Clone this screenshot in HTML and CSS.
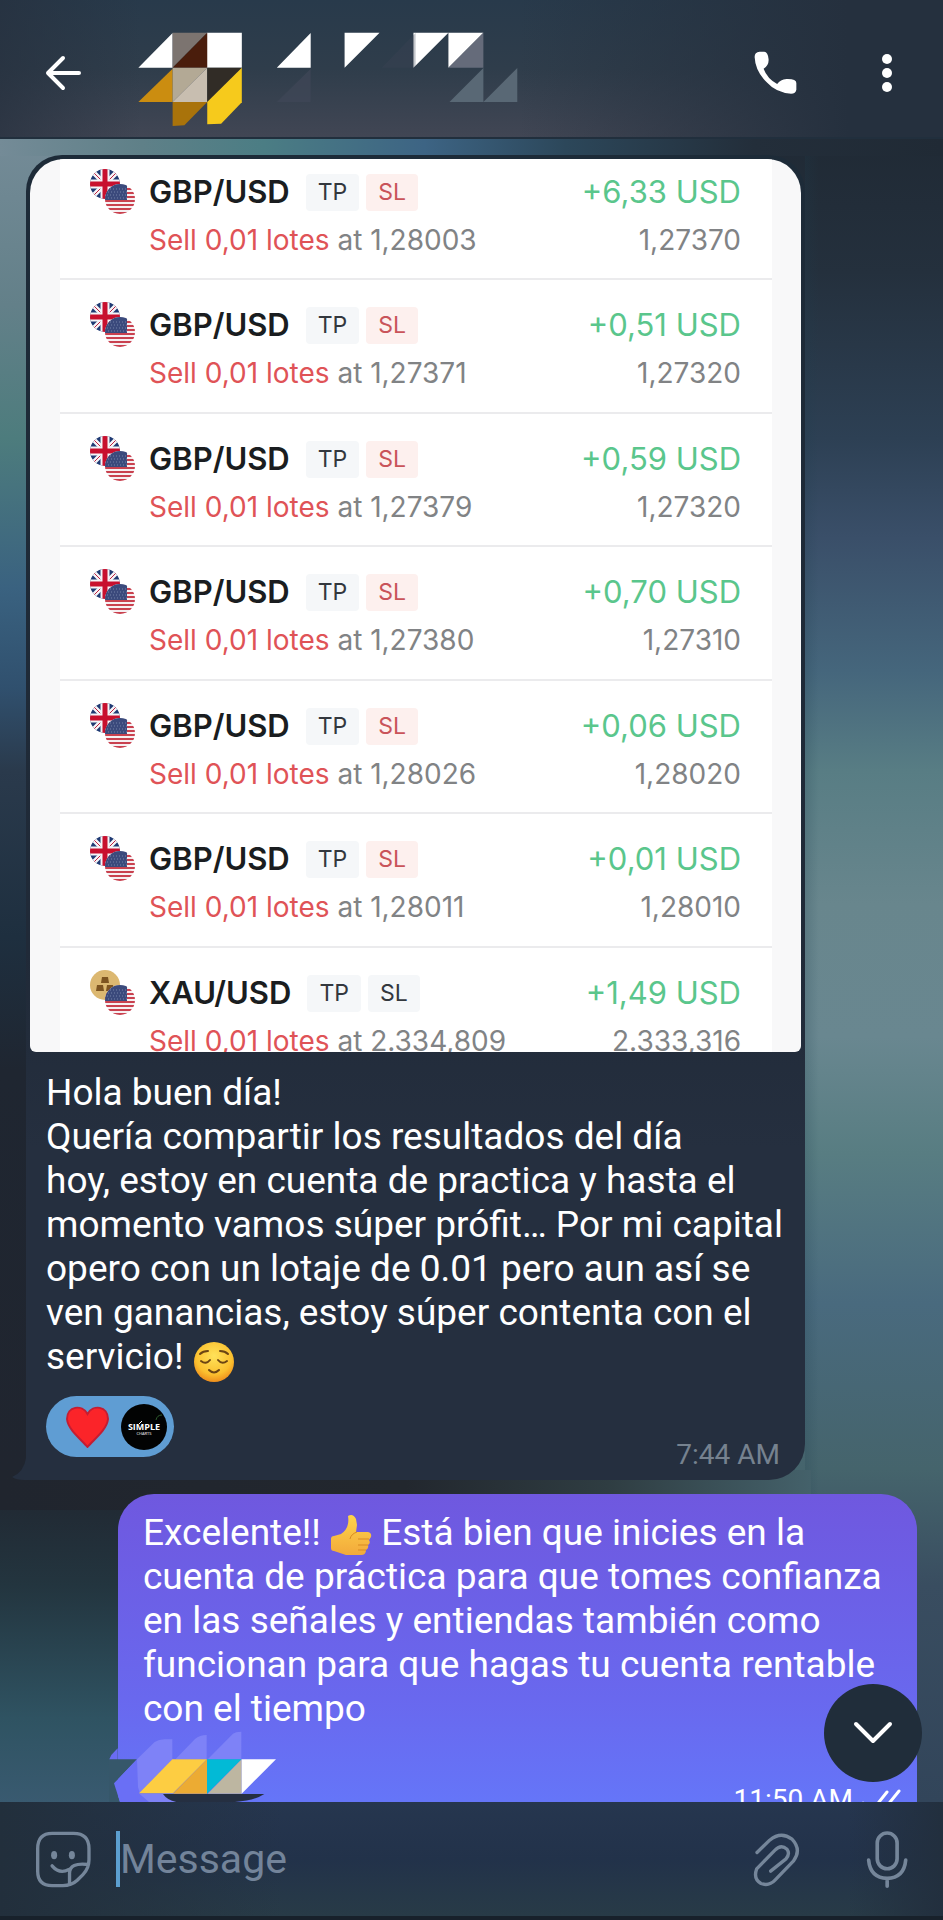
FILE: index.html
```
<!DOCTYPE html>
<html lang="es">
<head>
<meta charset="utf-8">
<meta name="viewport" content="width=device-width, initial-scale=1">
<title>Chat</title>
<link rel="stylesheet" href="styles.css">
</head>
<body>
<svg class="defs" width="0" height="0" aria-hidden="true">
  <defs>
    <clipPath id="disc-back"><circle cx="15" cy="15" r="15"/></clipPath>
    <clipPath id="disc-front"><circle cx="30" cy="30" r="15"/></clipPath>
    <radialGradient id="face" cx=".5" cy=".35" r=".65">
      <stop offset="0" stop-color="#ffe25a"/><stop offset=".7" stop-color="#fbc02f"/><stop offset="1" stop-color="#ee8e1c"/>
    </radialGradient>
    <linearGradient id="thumb" x1="0" y1="0" x2="0" y2="1">
      <stop offset="0" stop-color="#ffd54a"/><stop offset="1" stop-color="#f2a93b"/>
    </linearGradient>
  </defs>
  <symbol id="flag-us" viewBox="0 0 45 45">
    <g clip-path="url(#disc-front)">
      <path fill="#f6f0f2" d="M15 15h30v30H15z"/>
      <path stroke="#c9414f" stroke-width="2" d="M15 20h30M15 24h30M15 28h30M15 32h30M15 36h30M15 40h30M15 44h30"/>
      <path fill="#3b4a7c" d="M15 15h22v16H15z"/>
      <path stroke="#7482a8" stroke-width="1" stroke-dasharray="1 2" d="M17 20h20M18 23h19M17 26h20M18 29h19"/>
    </g>
  </symbol>
  <symbol id="pair-gbp" viewBox="0 0 45 45">
    <g clip-path="url(#disc-back)">
      <path fill="#1f3a73" d="M0 0h30v30H0z"/>
      <path stroke="#f4f4f8" stroke-width="5" d="M0 0l30 30M30 0L0 30"/>
      <path stroke="#c41f3b" stroke-width="1" d="M0 0l30 30M30 0L0 30"/>
      <path stroke="#f4f4f8" stroke-width="9" d="M15 0v30M0 15h30"/>
      <path stroke="#c8102e" stroke-width="5" d="M15 0v30M0 15h30"/>
    </g>
    <use href="#flag-us" width="45" height="45"/>
  </symbol>
  <symbol id="pair-xau" viewBox="0 0 45 45">
    <circle cx="15" cy="15" r="15" fill="#dcb871"/>
    <path fill="#7d5420" d="M12 7h6l1 6h-8zM7 15h6l1 6H6zM17 15h6l1 6h-8z"/>
    <use href="#flag-us" width="45" height="45"/>
  </symbol>
</svg>

<div class="app">
  <header class="topbar">
    <button class="icon-btn" type="button" aria-label="Back">
      <svg width="36" height="36" viewBox="0 0 36 36" fill="none" stroke="#fff" stroke-width="4" stroke-linecap="round" stroke-linejoin="round"><path d="M34 18H3M18 3L3 18l15 15"/></svg>
    </button>
    <svg class="contact" width="380" height="108" viewBox="387 56 1065 324" preserveAspectRatio="none" role="img" aria-label="Contact">
      <path fill="#fff" d="M388 202L484 98v104zM580 97h98v105h-98zM776 202l95-104v104zM966 97h98l-98 105zM1159 97h98l-98 105zM1257 97h98l-98 105z"/>
      <path fill="#7c7470" d="M484 97h97l-97 105z"/>
      <path fill="#4a1d0c" d="M581 97v105h-97z"/>
      <path fill="#cb8d10" d="M388 305l96-100v100z"/>
      <path fill="#b3a995" d="M484 202h97l-97 103z"/>
      <path fill="#c8beb0" d="M581 202v103h-97z"/>
      <path fill="#312c26" d="M581 202h97l-97 103z"/>
      <path fill="#a9730b" d="M484 305h97l-64 70-33 2z"/>
      <path fill="#f6ca1c" d="M678 202v104l-58 64-39 2v-67z"/>
      <path fill="#3e4656" d="M776 305l95-100v100z" opacity=".8"/>
      <path fill="#3e4656" d="M1070 202l95-104v104z" opacity=".3"/>
      <path fill="#656b7a" d="M1355 97v105h-98z"/>
      <path fill="#596875" d="M1260 305l95-102v102zM1355 305l95-102v102z"/>
    </svg>
    <div class="top-actions">
      <button class="icon-btn" type="button" aria-label="Call">
        <svg width="45" height="45" viewBox="580 150 136 136" fill="#fff"><path d="M585 172Q584 156 600 155h14q11 1 13 22 2 18-15 30 11 30 41 46 10-14 28-15 30-1 30 12v20q-2 12-16 12-45-3-72-33-36-34-38-77z"/></svg>
      </button>
      <button class="icon-btn" type="button" aria-label="More options">
        <svg width="12" height="40" viewBox="0 0 12 40" fill="#fff"><circle cx="6" cy="6" r="5"/><circle cx="6" cy="20" r="5"/><circle cx="6" cy="34" r="5"/></svg>
      </button>
    </div>
  </header>

  <main class="chat">
    <article class="bubble bubble-in">
      <svg class="tail" width="24" height="28" viewBox="0 0 24 28"><path fill="#252f3f" d="M14 0v6Q12 20 0 25q4 3 12 3h12V0z"/></svg>
      <div class="photo">
        <ul class="trades">
          <li class="trade">
            <svg class="pair-icon" width="45" height="45"><use href="#pair-gbp"/></svg>
            <div class="info"><p class="head"><strong>GBP/USD</strong><span class="chip">TP</span><span class="chip chip-red">SL</span></p><p class="sub"><span class="sell">Sell 0,01 lotes</span> at 1,28003</p></div>
            <div class="result"><p class="gain">+6,33 USD</p><p class="sub">1,27370</p></div>
          </li>
          <li class="trade">
            <svg class="pair-icon" width="45" height="45"><use href="#pair-gbp"/></svg>
            <div class="info"><p class="head"><strong>GBP/USD</strong><span class="chip">TP</span><span class="chip chip-red">SL</span></p><p class="sub"><span class="sell">Sell 0,01 lotes</span> at 1,27371</p></div>
            <div class="result"><p class="gain">+0,51 USD</p><p class="sub">1,27320</p></div>
          </li>
          <li class="trade">
            <svg class="pair-icon" width="45" height="45"><use href="#pair-gbp"/></svg>
            <div class="info"><p class="head"><strong>GBP/USD</strong><span class="chip">TP</span><span class="chip chip-red">SL</span></p><p class="sub"><span class="sell">Sell 0,01 lotes</span> at 1,27379</p></div>
            <div class="result"><p class="gain">+0,59 USD</p><p class="sub">1,27320</p></div>
          </li>
          <li class="trade">
            <svg class="pair-icon" width="45" height="45"><use href="#pair-gbp"/></svg>
            <div class="info"><p class="head"><strong>GBP/USD</strong><span class="chip">TP</span><span class="chip chip-red">SL</span></p><p class="sub"><span class="sell">Sell 0,01 lotes</span> at 1,27380</p></div>
            <div class="result"><p class="gain">+0,70 USD</p><p class="sub">1,27310</p></div>
          </li>
          <li class="trade">
            <svg class="pair-icon" width="45" height="45"><use href="#pair-gbp"/></svg>
            <div class="info"><p class="head"><strong>GBP/USD</strong><span class="chip">TP</span><span class="chip chip-red">SL</span></p><p class="sub"><span class="sell">Sell 0,01 lotes</span> at 1,28026</p></div>
            <div class="result"><p class="gain">+0,06 USD</p><p class="sub">1,28020</p></div>
          </li>
          <li class="trade">
            <svg class="pair-icon" width="45" height="45"><use href="#pair-gbp"/></svg>
            <div class="info"><p class="head"><strong>GBP/USD</strong><span class="chip">TP</span><span class="chip chip-red">SL</span></p><p class="sub"><span class="sell">Sell 0,01 lotes</span> at 1,28011</p></div>
            <div class="result"><p class="gain">+0,01 USD</p><p class="sub">1,28010</p></div>
          </li>
          <li class="trade">
            <svg class="pair-icon" width="45" height="45"><use href="#pair-xau"/></svg>
            <div class="info"><p class="head"><strong>XAU/USD</strong><span class="chip">TP</span><span class="chip">SL</span></p><p class="sub"><span class="sell">Sell 0,01 lotes</span> at 2.334,809</p></div>
            <div class="result"><p class="gain">+1,49 USD</p><p class="sub">2.333,316</p></div>
          </li>
        </ul>
      </div>
      <p class="text">Hola buen día!<br>Quería compartir los resultados del día<br>hoy, estoy en cuenta de practica y hasta el momento vamos súper prófit… Por mi capital opero con un lotaje de 0.01 pero aun así se ven ganancias, estoy súper contenta con el servicio! <svg class="emoji" width="42" height="42" viewBox="0 0 42 42" role="img" aria-label="😌"><circle cx="21" cy="21" r="20" fill="url(#face)"/><g fill="none" stroke="#6b4413" stroke-width="2" stroke-linecap="round"><path d="M8 20q5 4 9-1M25 19q4 5 9 1M7 13q3-3 8-3M27 10q5 0 8 3M16 29q5 5 10 0"/></g></svg></p>
      <footer class="meta">
        <button class="reaction" type="button" aria-label="Heart reaction">
          <svg width="43" height="42" viewBox="0 0 43 42"><path fill="#fb2429" stroke="#c41d32" stroke-width="2" d="M21.500 41C16 34 2 24 1 13 1 0 16-2 21.500 8 27-2 42 0 42 13c-1 11-15 21-20.500 28z"/></svg>
          <svg width="46" height="46" viewBox="0 0 46 46"><circle cx="23" cy="23" r="23" fill="#020303"/><text class="logo-a" x="23" y="26" text-anchor="middle">SIMPLE</text><text class="logo-b" x="23" y="31" text-anchor="middle">CHARTS</text><path fill="none" stroke="#fff" stroke-width="1" d="M18 20l3-3"/><path fill="none" stroke="#2d5a2c" stroke-width="1" d="M35 16q1-5 6-5"/></svg>
        </button>
        <time class="time">7:44 AM</time>
      </footer>
    </article>

    <article class="bubble bubble-out">
      <p class="text">Excelente!! <svg class="emoji emoji-thumb" width="42" height="42" viewBox="0 0 42 42" role="img" aria-label="👍"><path fill="url(#thumb)" d="M18 2q5-3 8 3l1 6-1 7h12q4 1 3 5l-2 3q2 3-1 5 1 3-2 5 0 5-5 5H16L4 37q-3 0-3-3V25q0-3 3-3l7-2Q20 14 18 2z"/><path fill="none" stroke="#d98a22" stroke-width="1" d="M28 25h11M28 31h10M28 36h8M27 18q-6 2-7 7"/></svg> Está bien que inicies en la cuenta de práctica para que tomes confianza en las señales y entiendas también como funcionan para que hagas tu cuenta rentable con el tiempo</p>
      <footer class="meta">
        <time class="time">11:50 AM</time>
        <svg width="41" height="26" viewBox="0 0 41 26" fill="none" stroke="#fff" stroke-width="3" stroke-linecap="round"><path d="M2 15l8 9L26 4M19 22l2 2L38 3"/></svg>
      </footer>
    </article>

    <svg class="mosaic" width="168" height="72" viewBox="28 90 504 216" aria-hidden="true">
      <path fill="#36576a" d="M28 178h84l-69 72 18 56H28z"/>
      <path fill="#6a6cf3" d="M54 145v33H29l6-13z"/>
      <path fill="#6a6ff5" d="M112 178l-69 72 18 56h90V178z"/>
      <path fill="#7e82f7" d="M112 178l53-52q12-8 30-8h23v60L120 278l-5-17zM228 177l58-60q14-12 35-12v72zM325 177l75-76q8-6 25-6v82zM120 282h72l36 24h-80z"/>
      <path fill="#fdcd42" d="M218 178h104L220 280H118z"/>
      <path fill="#ecab33" d="M322 178v103H220z"/>
      <path fill="#02bad6" d="M322 178h104L322 281z"/>
      <path fill="#bdb6a1" d="M426 178v103H324z"/>
      <path fill="#fff" d="M426 178h103L426 281z"/>
      <path fill="#252f41" d="M190 282h304q-30 20-88 24H230q-28-6-40-24z"/>
    </svg>

    <button class="scroll-down" type="button" aria-label="Scroll to bottom">
      <svg width="40" height="24" viewBox="0 0 40 24" fill="none" stroke="#fff" stroke-width="4" stroke-linecap="round" stroke-linejoin="round"><path d="M3 3l17 17L37 3"/></svg>
    </button>
  </main>

  <form class="composer">
    <button class="icon-btn" type="button" aria-label="Stickers">
      <svg width="57" height="57" viewBox="104 156 170 170" fill="none" stroke="#75869a" stroke-width="10" stroke-linecap="round" stroke-linejoin="round"><path d="M155 163h64q46 0 46 46v33q0 26-18 44l-17 17q-17 16-43 16h-32q-43 0-43-43v-67q0-46 43-46zM263 256q-56-7-56 26v34M155 260q22 26 50 11"/><g fill="#75869a" stroke="none"><ellipse cx="161" cy="228" rx="9" ry="12"/><ellipse cx="214" cy="228" rx="9" ry="12"/></g></svg>
    </button>
    <input class="field" type="text" placeholder="Message" aria-label="Message">
    <button class="icon-btn" type="button" aria-label="Attach file">
      <svg width="50" height="57" viewBox="335 515 150 170" fill="none" stroke="#75869a" stroke-width="10" stroke-linecap="round" stroke-linejoin="round"><path d="M350 579l38-37q34-28 67-3 30 32 4 66l-55 57q-18 19-42 10-24-14-13-44l55-56q18-19 36-3 10 14-3 29l-46 37"/></svg>
    </button>
    <button class="icon-btn" type="button" aria-label="Record voice message">
      <svg width="45" height="61" viewBox="675 510 136 182" fill="none" stroke="#75869a" stroke-width="11" stroke-linecap="round"><rect x="712" y="521" width="60" height="108" rx="30"/><path d="M686 603q5 54 56 55 51-1 56-55M742 658v24"/></svg>
    </button>
  </form>
</div>
</body>
</html>
```
FILE: styles.css
```
* {
  box-sizing: border-box;
}

body {
  margin: 0;
  font-family: Roboto, "Liberation Sans", sans-serif;
  background: #1d2732;
  color: #fff;
}

p,
ul {
  margin: 0;
  padding: 0;
}

button {
  border: 0;
  padding: 0;
  background: none;
  font: inherit;
  color: inherit;
}

svg {
  flex: none;
}

.defs {
  position: absolute;
}

.app {
  display: flex;
  flex-direction: column;
  height: 100vh;
  overflow: hidden;
}

/* Top bar */
.topbar {
  flex: none;
  display: flex;
  align-items: center;
  gap: 57px;
  height: 139px;
  padding: 8px 50px 0 45px;
  border-bottom: 2px solid #212f3d;
  background:
    linear-gradient(90deg, rgba(38, 48, 62, .7), transparent 15%, transparent 55%, #25303e 90%),
    linear-gradient(180deg, #283a4b, #2f3d4b 50%, #414654);
}

.icon-btn {
  display: flex;
  flex: none;
}

.top-actions {
  display: flex;
  align-items: center;
  gap: 83px;
  margin-left: auto;
}

/* Conversation */
.chat {
  position: relative;
  flex: 1;
  min-height: 0;
  display: flex;
  flex-direction: column;
  gap: 14px;
  padding: 16px 26px 0;
  overflow: hidden;
  background:
    linear-gradient(90deg, #748b97, #5f8088 15%, #4b7d84 28%, #3d6484 45%, #2c475a 60%, #232e3a 80%, #202a35) top / 100% 17px no-repeat,
    linear-gradient(90deg, #20252e, #22272e 50%, #2f3d42 75%, #44616a) 0 82% / 86% 40px no-repeat,
    linear-gradient(90deg, rgba(30, 62, 78, .2), transparent 10%) right / 138px 100% no-repeat,
    linear-gradient(180deg, #202a35, #24303d 8%, #2d4054 18%, #3a4f69 24%, #45667c 32%, #587d84 38%, #68868d 46%, #698790 54%, #587d82 61%, #496a7e 70%, #45646c 80%, #394d60 87%, #32455a) right / 50% 100% no-repeat,
    linear-gradient(180deg, #748b97, #638089 10%, #4d7c7d 18%, #3a6280 27%, #30506e 33%, #2a3a4c 38%, #1e2f3f 48%, #1f2631 56%, #20252f 80%, #23353f 87%, #2f5362 95%, #395a70) left / 50% 100% no-repeat;
}

.bubble {
  position: relative;
  flex: none;
}

.text {
  font-size: 37px;
  line-height: 44px;
}

.emoji {
  vertical-align: -10px;
  margin: -4px 0;
}

.emoji-thumb {
  vertical-align: -7px;
}

.time {
  font-size: 28px;
  line-height: 32px;
}

.meta {
  display: flex;
}

.bubble-in {
  width: 88%;
  max-width: 779px;
  padding: 4px;
  padding-bottom: 0;
  border-radius: 36px 36px 36px 0;
  background: linear-gradient(180deg, #1d2b38, #202a38 60%, #252f3f 75%);
}

.bubble-in .text {
  padding: 19px 12px 0 16px;
}

.bubble-in .meta {
  justify-content: space-between;
  align-items: flex-end;
  padding: 17px 21px 9px 16px;
}

.bubble-in .time {
  color: #76828f;
}

.tail {
  position: absolute;
  left: -14px;
  bottom: 0;
}

.reaction {
  display: flex;
  align-items: center;
  gap: 12px;
  height: 61px;
  margin-bottom: 14px;
  padding: 0 7px 0 20px;
  border-radius: 31px;
  background: #5f9dd3;
}

.logo-a {
  font-family: "Open Sans", sans-serif;
  font-size: 9px;
  font-weight: 700;
  fill: #fff;
}

.logo-b {
  font-family: "Open Sans", sans-serif;
  font-size: 4px;
  fill: #fff;
}

/* Trade history picture */
.photo {
  height: 893px;
  padding: 0 29px 0 30px;
  overflow: hidden;
  border-radius: 34px 34px 6px 6px;
  background: #f8f8f9;
}

.trades {
  height: 100%;
  background: #fff;
  list-style: none;
  font-family: Inter, "Liberation Sans", sans-serif;
}

.trade {
  display: flex;
  align-items: flex-start;
  padding: 27px 31px 21px 30px;
  border-bottom: 2px solid #ebebed;
}

.trade:nth-child(even) {
  padding-bottom: 22px;
}

.trade:first-child {
  padding-top: 15px;
}

.pair-icon {
  margin: -5px 14px 0 0;
}

.info {
  flex: 1;
}

.info,
.result {
  display: grid;
  gap: 12px;
}

.result {
  text-align: right;
}

.head {
  display: flex;
  align-items: center;
  gap: 7px;
  height: 37px;
}

.head strong {
  margin-right: 9px;
  font-size: 31px;
  font-weight: 600;
  line-height: 35px;
  padding-bottom: 2px;
  color: #1a1d20;
}

.chip {
  padding: 0 12px;
  border-radius: 4px;
  background: #f5f7f9;
  font-size: 23px;
  line-height: 37px;
  color: #33383e;
}

.chip-red {
  background: #fdf0ee;
  color: #c9545a;
}

.sub {
  font-size: 28px;
  line-height: 34px;
  white-space: nowrap;
  color: #818385;
}

.sell {
  color: #df5357;
}

.gain {
  padding-bottom: 2px;
  font-size: 31px;
  line-height: 35px;
  color: #5ac68c;
}

/* Outgoing message */
.bubble-out {
  align-self: flex-end;
  width: 90%;
  max-width: 799px;
  min-height: 340px;
  padding: 17px 15px 0 25px;
  border-radius: 36px 36px 0 0;
  background: linear-gradient(180deg, #6f58df, #6968ee 60%, #6575f8 90%);
}

.bubble-out .meta {
  justify-content: flex-end;
  gap: 8px;
  padding-top: 53px;
}

.bubble-out .meta svg {
  margin-top: 4px;
}

.mosaic {
  position: absolute;
  left: 109px;
  bottom: 0;
}

.scroll-down {
  position: absolute;
  right: 21px;
  bottom: 20px;
  display: grid;
  place-items: center;
  width: 98px;
  height: 98px;
  border-radius: 50%;
  background: #202d3a;
}

/* Composer */
.composer {
  flex: none;
  display: flex;
  align-items: center;
  height: 118px;
  padding: 0 33px 0 35px;
  border-bottom: 4px solid #18212b;
  background:
    linear-gradient(90deg, #222f3c, transparent 30%, transparent 90%, #222f3e),
    linear-gradient(180deg, #26364f, #22324a 50%, #283b47);
}

.field {
  flex: 1;
  min-width: 0;
  height: 56px;
  margin-left: 24px;
  padding: 0;
  border: 0;
  border-left: 4px solid #5c9fd0;
  outline: 0;
  background: none;
  font: 41px Roboto, "Liberation Sans", sans-serif;
  color: #fff;
}

.field::placeholder {
  color: #73849a;
  opacity: 1;
}

.composer .icon-btn:last-child {
  margin-left: 63px;
}
```
